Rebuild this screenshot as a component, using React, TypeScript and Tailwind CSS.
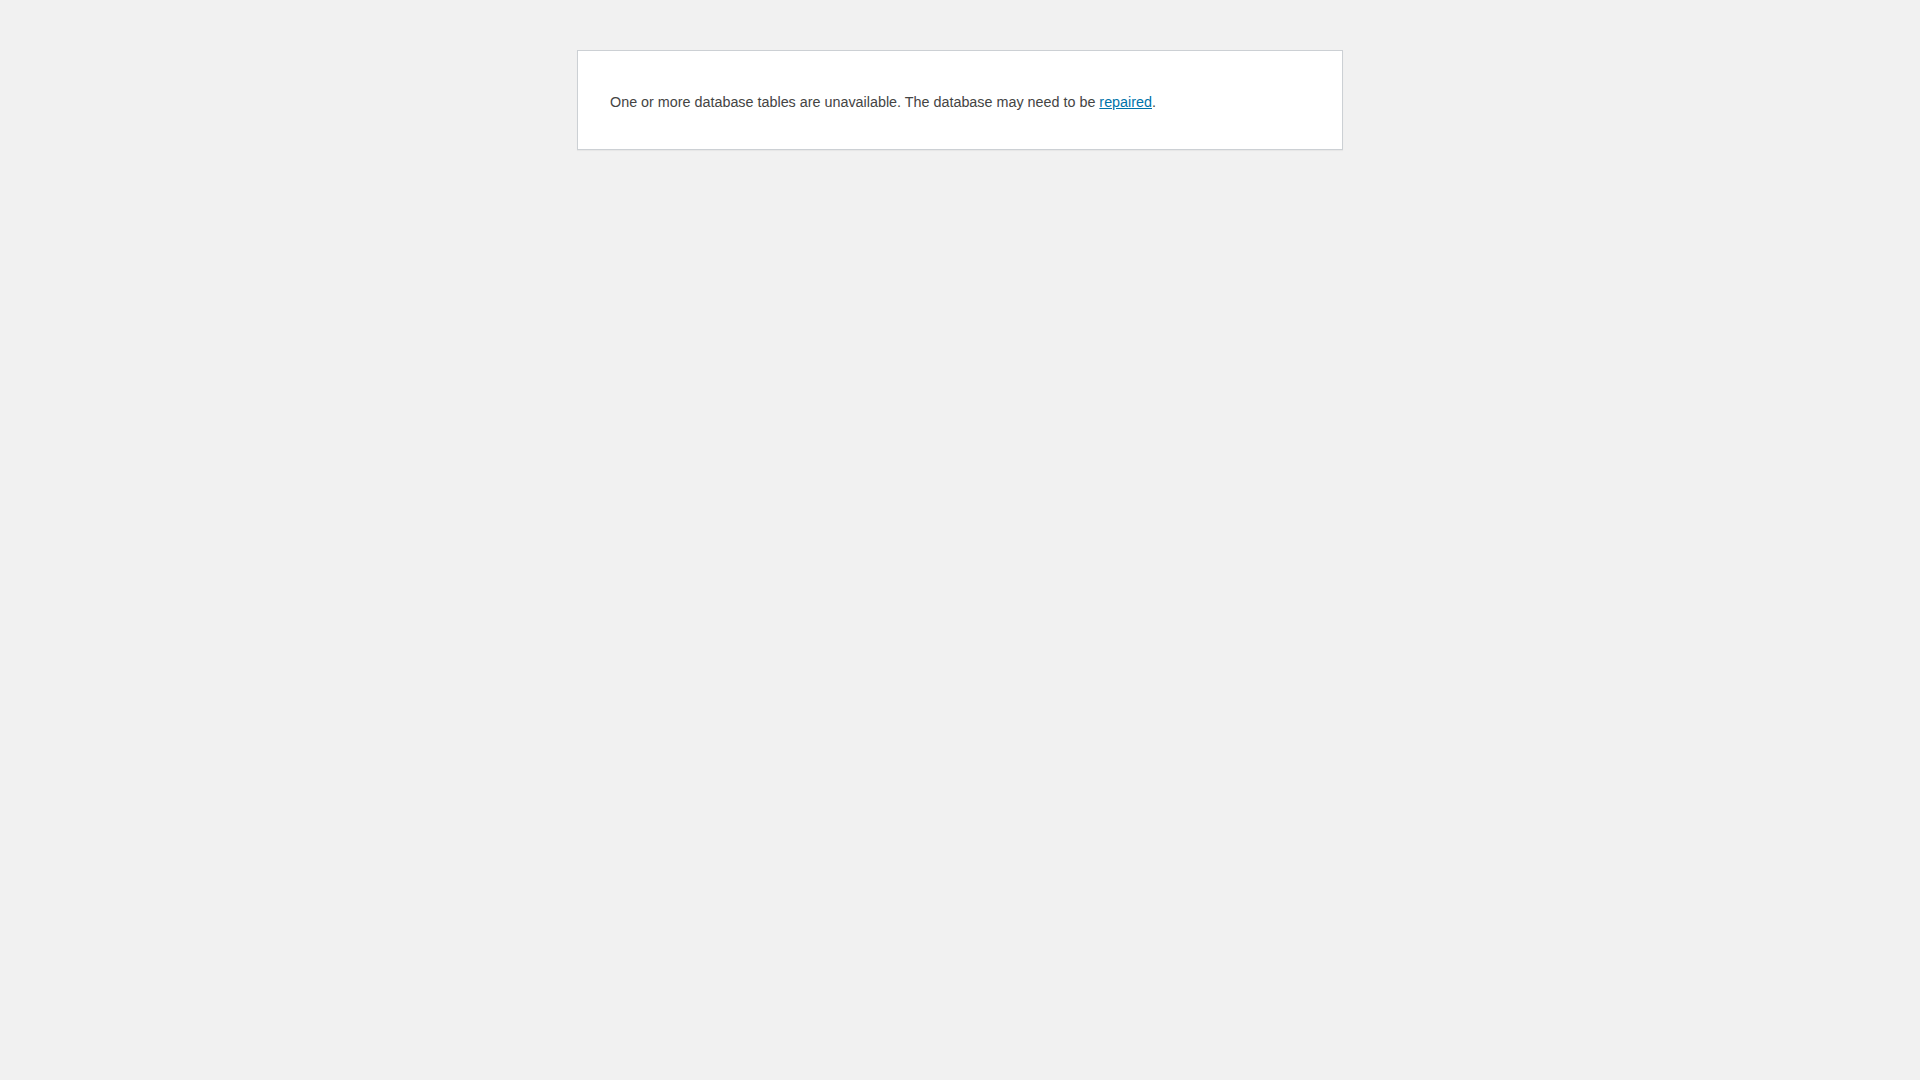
export default function App() {
  return (
    <div className="min-h-[1080px] bg-[#f1f1f1] pt-[50px] pb-[32px] [font-family:'Liberation_Sans',Arial,sans-serif] text-[#444]">
      <div className="mx-auto box-content max-w-[700px] border border-[#ccd0d4] bg-white px-[32px] py-[16px] shadow-[0_1px_1px_rgba(0,0,0,0.04)]">
        <p className="mt-[25px] mb-[20px] text-[14.35px] leading-[21px]">
          One or more database tables are unavailable. The database may need to be{" "}
          <a href="#" className="text-[#0073aa] underline">repaired</a>.
        </p>
      </div>
    </div>
  );
}
